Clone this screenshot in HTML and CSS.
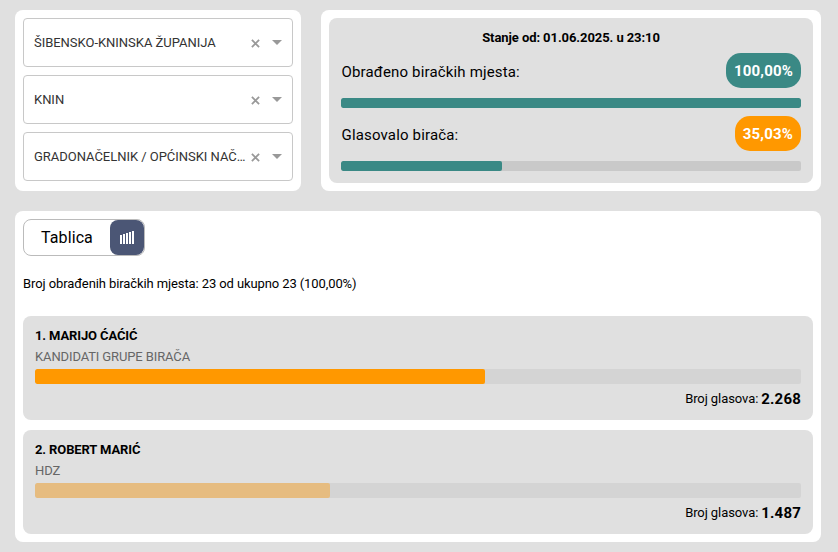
FILE: index.html
```html
<!DOCTYPE html>
<html lang="hr">
<head>
<meta charset="utf-8">
<title>Rezultati izbora</title>
<link rel="stylesheet" href="styles.css">
</head>
<body>
<main class="page">
  <div class="top">
    <section class="card filters">
      <div class="select"><span class="value">ŠIBENSKO-KNINSKA ŽUPANIJA</span><svg class="clear" viewBox="0 0 10 10"><path d="M1 1 9 9M9 1 1 9"/></svg><svg class="arrow" viewBox="0 0 10 5"><path d="M0 0H10L5 5Z"/></svg></div>
      <div class="select"><span class="value">KNIN</span><svg class="clear" viewBox="0 0 10 10"><path d="M1 1 9 9M9 1 1 9"/></svg><svg class="arrow" viewBox="0 0 10 5"><path d="M0 0H10L5 5Z"/></svg></div>
      <div class="select"><span class="value">GRADONAČELNIK / OPĆINSKI NAČ…</span><svg class="clear" viewBox="0 0 10 10"><path d="M1 1 9 9M9 1 1 9"/></svg><svg class="arrow" viewBox="0 0 10 5"><path d="M0 0H10L5 5Z"/></svg></div>
    </section>
    <section class="card status">
      <div class="panel">
        <div class="updated">Stanje od: 01.06.2025. u 23:10</div>
        <div class="stat"><span>Obrađeno biračkih mjesta:</span><span class="badge">100,00%</span></div>
        <div class="progress"><div class="fill" style="width:100%"></div></div>
        <div class="stat"><span>Glasovalo birača:</span><span class="badge orange">35,03%</span></div>
        <div class="progress"><div class="fill" style="width:35.03%"></div></div>
      </div>
    </section>
  </div>
  <section class="card results">
    <div class="toggle">
      <span class="tab">Tablica</span>
      <span class="tab-chart"><svg width="14" height="13" viewBox="0 0 14 13"><path d="M0 4h2v9H0zM3 3h2v10H3zM6 2h2v11H6zM9 1h2v12H9zM12 0h2v13h-2z"/></svg></span>
    </div>
    <div class="summary">Broj obrađenih biračkih mjesta: 23 od ukupno 23 (100,00%)</div>
    <article class="candidate">
      <div class="name">1. MARIJO ĆAĆIĆ</div>
      <div class="party">KANDIDATI GRUPE BIRAČA</div>
      <div class="bar"><div class="bar-fill" style="width:58.75%"></div></div>
      <div class="votes"><span>Broj glasova:</span><b>2.268</b></div>
    </article>
    <article class="candidate">
      <div class="name">2. ROBERT MARIĆ</div>
      <div class="party">HDZ</div>
      <div class="bar"><div class="bar-fill pale" style="width:38.52%"></div></div>
      <div class="votes"><span>Broj glasova:</span><b>1.487</b></div>
    </article>
  </section>
</main>
</body>
</html>
```
FILE: styles.css
```css
* { box-sizing: border-box; }
body {
  margin: 0;
  background: #e0e0e0;
  color: #000;
  font: 13px/20px Roboto, "Liberation Sans", sans-serif;
}
.page {
  width: 838px;
  height: 552px;
  padding: 10px 17px 10px 15px;
  display: flex;
  flex-direction: column;
  gap: 20px;
  overflow: hidden;
}
.top { display: flex; gap: 20px; height: 181px; }
.card { background: #fff; border-radius: 8px; padding: 8px; }
.filters { width: 286px; display: flex; flex-direction: column; gap: 8px; }
.select {
  height: 49px;
  display: flex;
  align-items: center;
  justify-content: space-between;
  padding: 0 10px;
  border: 1px solid #c8c8c8;
  border-radius: 4px;
  color: #333;
}
.value {
  flex: 1;
  white-space: nowrap;
  letter-spacing: -0.03px;
}
.clear { flex: none; width: 9px; height: 9px; margin: 1px 12px 0 4px; fill: none; stroke: #999; stroke-width: 2; }
.arrow { flex: none; width: 10px; height: 5px; fill: #999; }
.status { flex: 1; }
.panel {
  height: 165px;
  padding: 10px 12px 0;
  border-radius: 8px;
  background: #e0e0e0;
}
.updated { height: 20px; text-align: center; font-weight: 700; letter-spacing: -0.08px; }
.stat {
  display: flex;
  justify-content: space-between;
  height: 35px;
  margin-top: 5px;
  padding-left: 0.5px;
  font-size: 15px;
  line-height: 38px;
  letter-spacing: 0.16px;
}
.progress + .stat { margin-top: 8px; }
.badge {
  height: 35px;
  padding: 0 8px;
  border-radius: 15px;
  background: #3a8985;
  color: #fff;
  font-weight: 700;
  line-height: 36px;
}
.orange { background: #ff9800; }
.progress { height: 10px; margin-top: 10px; border-radius: 2px; background: #c9c9c9; overflow: hidden; }
.fill { height: 100%; border-radius: 2px; background: #3a8985; }
.results { height: 331px; }
.toggle {
  display: flex;
  width: 122px;
  height: 37px;
  border: 1px solid #bbb;
  border-radius: 8px;
}
.tab { flex: 1; padding-left: 17px; font-size: 16px; line-height: 35px; letter-spacing: 0.1px; }
.tab-chart {
  width: 34px;
  display: flex;
  align-items: center;
  justify-content: center;
  border-radius: 8px;
  background: #4b5675;
}
.tab-chart svg { fill: #fff; }
.summary { margin: 18px 0 22px; letter-spacing: -0.1px; }
.candidate {
  height: 104px;
  padding: 10px 12px 0;
  border-radius: 8px;
  background: #e0e0e0;
}
.candidate + .candidate { margin-top: 10px; }
.name { font-weight: 700; letter-spacing: -0.12px; }
.party { height: 23px; line-height: 22px; color: #666; letter-spacing: -0.12px; }
.bar { height: 15px; border-radius: 2px; background: #d4d4d4; overflow: hidden; }
.bar-fill { height: 100%; border-radius: 2px; background: #ff9800; }
.pale { background: #e6bc80; }
.votes { display: flex; justify-content: flex-end; gap: 3px; margin-top: 5px; }
.votes span { letter-spacing: -0.08px; }
.votes b { font-size: 15px; letter-spacing: 0.2px; }
```
